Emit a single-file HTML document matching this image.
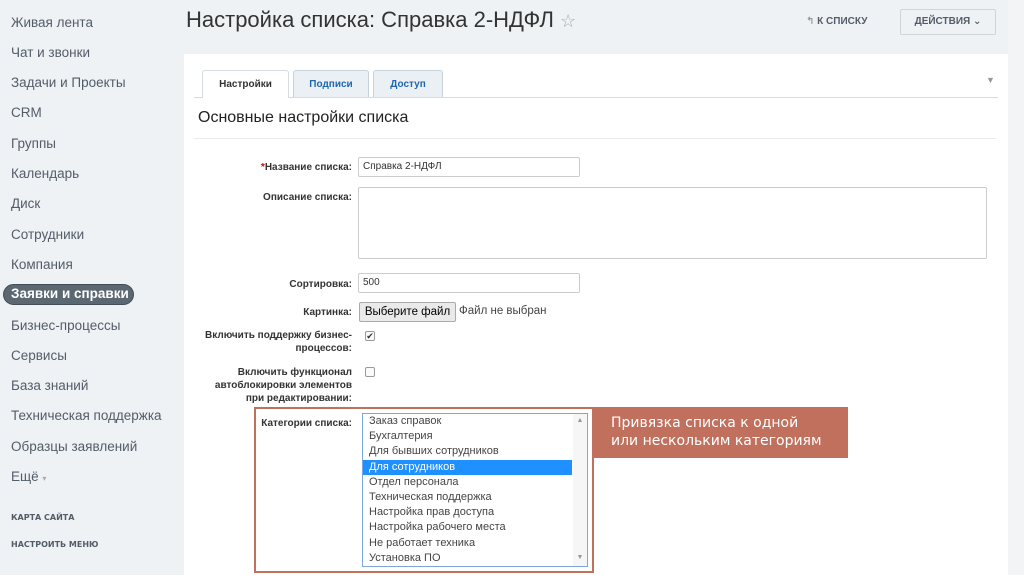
<!DOCTYPE html>
<html><head><meta charset="utf-8"><style>
*{box-sizing:border-box;margin:0;padding:0}
body{width:1024px;height:575px;overflow:hidden;background:#eef2f4;font-family:"Liberation Sans","DejaVu Sans",sans-serif;position:relative;color:#333}
.a{position:absolute}
.nav{left:11px;color:#535c69;font-family:"Liberation Sans",sans-serif;font-size:13.5px}
.lbl{position:absolute;right:672px;text-align:right;font-size:10px;font-weight:bold;color:#333;line-height:13px}
.inp{position:absolute;border:1px solid #ccc;background:#fff;font-size:10px;padding:3px 4px;border-radius:2px}
.opt{height:15.2px;line-height:15px;padding-left:6px;font-size:11px;color:#444}
</style></head><body>
<div class="a nav" style="top:15px">Живая лента</div>
<div class="a nav" style="top:45px">Чат и звонки</div>
<div class="a nav" style="top:75px">Задачи и Проекты</div>
<div class="a nav" style="top:105px">CRM</div>
<div class="a nav" style="top:136px">Группы</div>
<div class="a nav" style="top:166px">Календарь</div>
<div class="a nav" style="top:196px">Диск</div>
<div class="a nav" style="top:227px">Сотрудники</div>
<div class="a nav" style="top:257px">Компания</div>
<div class="a" style="left:3px;top:284px;width:131px;height:21px;border-radius:11px;background:#5b6771;border:1px solid #444c55"></div>
<div class="a nav" style="top:286px;color:#fff;font-weight:bold">Заявки и справки</div>
<div class="a nav" style="top:318px">Бизнес-процессы</div>
<div class="a nav" style="top:348px">Сервисы</div>
<div class="a nav" style="top:378px">База знаний</div>
<div class="a nav" style="top:408px">Техническая поддержка</div>
<div class="a nav" style="top:439px">Образцы заявлений</div>
<div class="a nav" style="top:469px">Ещё <span style="font-size:8px;color:#aaa">▾</span></div>
<div class="a" style="left:11px;top:513px;font-size:8px;font-weight:bold;color:#535c69;font-family:'DejaVu Sans',sans-serif">КАРТА САЙТА</div>
<div class="a" style="left:11px;top:540px;font-size:8px;font-weight:bold;color:#535c69;font-family:'DejaVu Sans',sans-serif">НАСТРОИТЬ МЕНЮ</div>

<div class="a" style="left:186px;top:7px;color:#333;font-family:'Liberation Sans',sans-serif;font-size:22px">Настройка списка: Справка 2-НДФЛ <span style="color:#aaa;font-size:18px">☆</span></div>
<div class="a" style="left:806px;top:16px;font-size:10px;font-weight:bold;color:#535c69"><span style="color:#999">↰</span> К СПИСКУ</div>
<div class="a" style="left:900px;top:9px;width:96px;height:26px;border:1px solid #d0d4d8;border-radius:2px;background:#eef2f4;font-size:10px;font-weight:bold;color:#535c69;text-align:center;line-height:24px">ДЕЙСТВИЯ ⌄</div>
<div class="a" style="left:1008px;top:0;width:16px;height:575px;background:#f2f4f5"></div>

<div class="a" style="left:184px;top:54px;width:824px;height:521px;background:#fff"></div>
<div class="a" style="left:194px;top:97px;width:804px;border-top:1px solid #d6dde2"></div>
<div class="a" style="left:202px;top:70px;width:87px;height:28px;background:#fff;border:1px solid #d6dde2;border-bottom:none;border-radius:3px 3px 0 0;font-size:10px;font-weight:bold;color:#333;text-align:center;line-height:27px">Настройки</div>
<div class="a" style="left:293px;top:70px;width:76px;height:27px;background:#eaf0f4;border:1px solid #c8d2da;border-bottom:none;border-radius:3px 3px 0 0;font-size:10px;font-weight:bold;color:#2067b0;text-align:center;line-height:27px">Подписи</div>
<div class="a" style="left:373px;top:70px;width:70px;height:27px;background:#eaf0f4;border:1px solid #c8d2da;border-bottom:none;border-radius:3px 3px 0 0;font-size:10px;font-weight:bold;color:#2067b0;text-align:center;line-height:27px">Доступ</div>
<div class="a" style="left:986px;top:75px;font-size:9px;color:#999">▼</div>
<div class="a" style="left:198px;top:109px;color:#222;font-family:'Liberation Sans',sans-serif;font-size:16px">Основные настройки списка</div>
<div class="a" style="left:194px;top:138px;width:802px;border-top:1px solid #e8ecee"></div>

<div class="lbl" style="top:161px"><span style="color:#d00">*</span>Название списка:</div>
<div class="inp" style="left:358px;top:157px;width:222px;height:20px">Справка 2-НДФЛ</div>
<div class="lbl" style="top:191px">Описание списка:</div>
<div class="inp" style="left:358px;top:187px;width:629px;height:72px"></div>
<div class="lbl" style="top:278px">Сортировка:</div>
<div class="inp" style="left:358px;top:273px;width:222px;height:20px">500</div>
<div class="lbl" style="top:306px">Картинка:</div>
<div class="a" style="left:359px;top:302px;width:97px;height:20px;border:1px solid #aaa;background:#eaeaea;border-radius:2px;font-size:11.5px;text-align:center;line-height:18px;color:#000">Выберите файл</div>
<div class="a" style="left:459px;top:305px;font-size:11.5px;color:#444">Файл не выбран</div>
<div class="lbl" style="top:329px">Включить поддержку бизнес-<br>процессов:</div>
<div class="a" style="left:365px;top:331px;width:10px;height:10px;border:1px solid #999;border-radius:2px;font-size:9px;line-height:8px;text-align:center;background:#fafafa">✔</div>
<div class="lbl" style="top:366px">Включить функционал<br>автоблокировки элементов<br>при редактировании:</div>
<div class="a" style="left:365px;top:367px;width:10px;height:10px;border:1px solid #999;border-radius:2px;background:#fafafa"></div>

<div class="a" style="left:254px;top:407px;width:340px;height:166px;border:2px solid #c0705c"></div>
<div class="lbl" style="top:417px">Категории списка:</div>
<div class="a" style="left:362px;top:413px;width:226px;height:154px;border:1px solid #7aa7e0;background:#fff;overflow:hidden">
<div class="opt">Заказ справок</div><div class="opt">Бухгалтерия</div><div class="opt">Для бывших сотрудников</div>
<div class="opt" style="background:#1e90ff;color:#fff;margin-right:15px">Для сотрудников</div>
<div class="opt">Отдел персонала</div><div class="opt">Техническая поддержка</div><div class="opt">Настройка прав доступа</div><div class="opt">Настройка рабочего места</div><div class="opt">Не работает техника</div><div class="opt">Установка ПО</div>
<div class="a" style="right:0;top:0;width:14px;height:152px;background:#f6f6f6;font-size:7px;color:#999;text-align:center"><div style="margin-top:3px">▲</div><div style="margin-top:130px">▼</div></div>
</div>
<div class="a" style="left:592px;top:407px;width:256px;height:51px;background:#c0705c;color:#fff;font-family:'DejaVu Sans',sans-serif;font-size:14px;line-height:18px;padding:7px 0 0 19px">Привязка списка к одной<br>или нескольким категориям</div>
</body></html>
